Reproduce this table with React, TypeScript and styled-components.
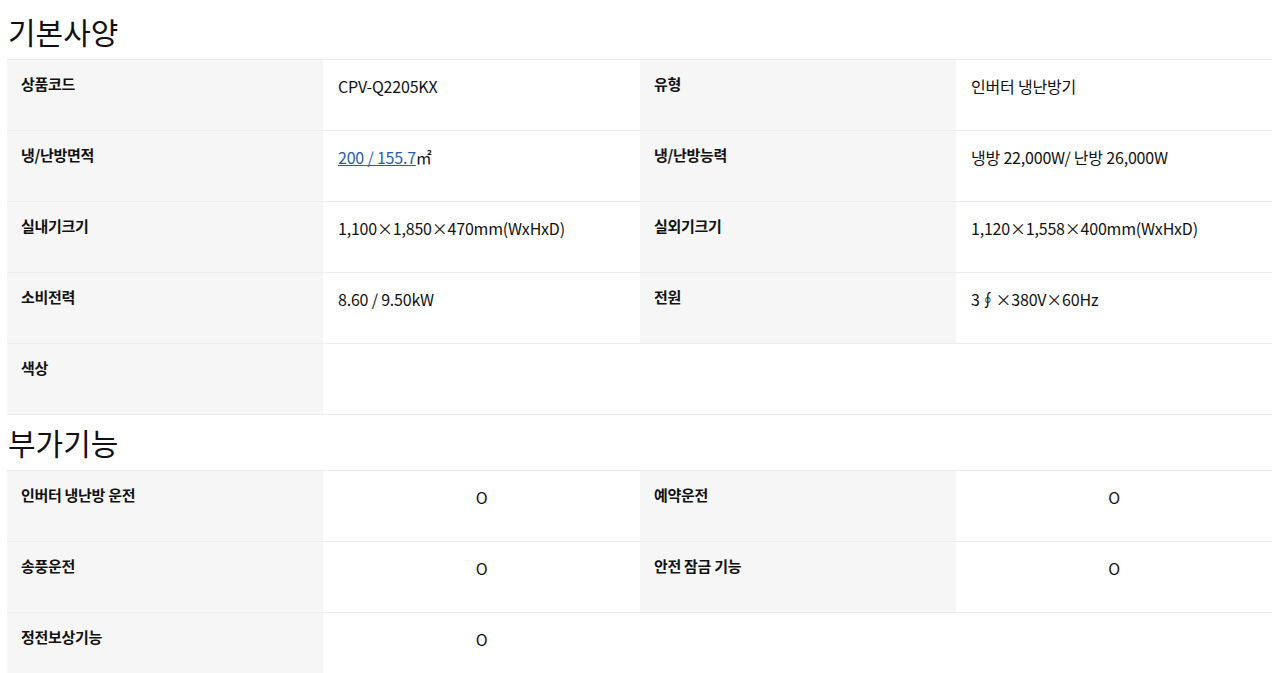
import React from "react";
import styled, { createGlobalStyle } from "styled-components";

const Global = createGlobalStyle`
  html, body { margin: 0; padding: 0; background: #fff; }
  body { font-family: "Noto Sans CJK KR", "Noto Sans", sans-serif; color: #111; }
`;

const Page = styled.div`
  padding: 4px 4px 0 7px;
  width: 1265px;
`;

const Heading = styled.h2`
  margin: 0;
  padding-left: 1px;
  height: 55px;
  line-height: 55px;
  font-size: 30px;
  font-weight: 400;
  color: #111;
`;

const Table = styled.div`
  display: flex;
  flex-direction: column;
  border-bottom: 1px solid #ececec;
`;

const Row = styled.div`
  display: grid;
  grid-template-columns: 316px 317px 316px 316px;
  height: 70px;
  border-top: 1px solid #ececec;
`;

const Label = styled.div`
  background: #f6f6f6;
  padding: 14px 14px 0;
  font-size: 15px;
  font-weight: 700;
  color: #111;
  line-height: 20px;
  letter-spacing: -0.3px;
`;

const Value = styled.div<{ $center?: boolean; $span?: number }>`
  background: #fff;
  padding: 16px 15px 0;
  font-size: 16px;
  color: #111;
  line-height: 20px;
  letter-spacing: -0.2px;
  text-align: ${(p) => (p.$center ? "center" : "left")};
  ${(p) => (p.$span ? `grid-column: span ${p.$span};` : "")}
`;

const Link = styled.a`
  color: #1f5fb0;
  text-decoration: underline;
`;

type Cell = { label: string; value: React.ReactNode };

const basic: Cell[][] = [
  [
    { label: "상품코드", value: "CPV-Q2205KX" },
    { label: "유형", value: "인버터 냉난방기" },
  ],
  [
    {
      label: "냉/난방면적",
      value: (
        <>
          <Link href="#">200 / 155.7</Link>㎡
        </>
      ),
    },
    { label: "냉/난방능력", value: "냉방 22,000W/ 난방 26,000W" },
  ],
  [
    { label: "실내기크기", value: "1,100×1,850×470mm(WxHxD)" },
    { label: "실외기크기", value: "1,120×1,558×400mm(WxHxD)" },
  ],
  [
    { label: "소비전력", value: "8.60 / 9.50kW" },
    { label: "전원", value: "3∮×380V×60Hz" },
  ],
  [{ label: "색상", value: "" }],
];

const extra: Cell[][] = [
  [
    { label: "인버터 냉난방 운전", value: "O" },
    { label: "예약운전", value: "O" },
  ],
  [
    { label: "송풍운전", value: "O" },
    { label: "안전 잠금 기능", value: "O" },
  ],
  [{ label: "정전보상기능", value: "O" }],
];

function SpecTable({ rows, center, spanLast }: { rows: Cell[][]; center?: boolean; spanLast?: boolean }) {
  return (
    <Table>
      {rows.map((r, i) => (
        <Row key={i}>
          {r.map((c, j) => (
            <React.Fragment key={j}>
              <Label>{c.label}</Label>
              <Value $center={center} $span={r.length === 1 && spanLast ? 3 : undefined}>
                {c.value}
              </Value>
            </React.Fragment>
          ))}
        </Row>
      ))}
    </Table>
  );
}

export default function App() {
  return (
    <Page>
      <Global />
      <Heading>기본사양</Heading>
      <SpecTable rows={basic} spanLast />
      <Heading>부가기능</Heading>
      <SpecTable rows={extra} center />
    </Page>
  );
}
